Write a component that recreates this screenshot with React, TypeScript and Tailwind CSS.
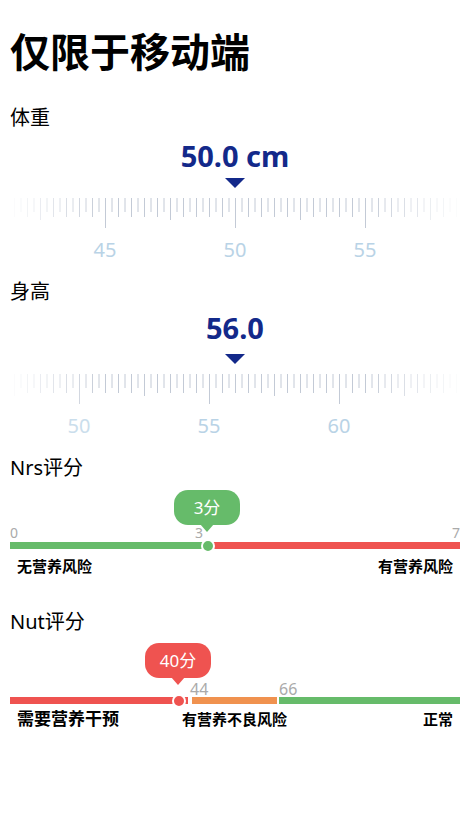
import React from "react";

const F = "font-['Noto_Sans','Noto_Sans_CJK_SC',sans-serif]";

function fade(x: number) {
  const d = Math.min(x - 8, 460 - x);
  return Math.max(0.05, Math.min(1, d / 95));
}

function Ruler({ center }: { center: number }) {
  const ticks: { x: number; len: number; op: number }[] = [];
  for (let k = -40; k <= 40; k++) {
    const x = 235 + k * 6.5;
    if (x < 12 || x > 458) continue;
    const q = Math.round((center + k * 0.25) * 4);
    let len = 14;
    if (q % 20 === 0) len = 30;
    else if (q % 10 === 0) len = 22;
    else if (q % 2 === 0) len = 19;
    ticks.push({ x, len, op: fade(x) });
  }
  const labels: { m: number; x: number }[] = [];
  for (let m = Math.ceil((center - 9) / 5) * 5; m <= center + 9; m += 5) {
    const x = 235 + (m - center) * 26;
    if (x < 20 || x > 446) continue;
    labels.push({ m, x });
  }
  return (
    <div>
      <svg width="466" height="30" className="block">
        {ticks.map((t, i) => (
          <line
            key={i}
            x1={t.x + 0.5}
            x2={t.x + 0.5}
            y1={0}
            y2={t.len}
            stroke="#c3cad6"
            strokeWidth={1}
            opacity={t.op}
          />
        ))}
      </svg>
      <div className="relative mt-[10px] h-[24px]">
        {labels.map((l) => (
          <span
            key={l.m}
            className="absolute top-0 -translate-x-1/2 text-[20px] leading-[24px] text-[#b9d3e6]"
            style={{ left: l.x, opacity: fade(l.x) }}
          >
            {l.m}
          </span>
        ))}
      </div>
    </div>
  );
}

function Pointer() {
  return (
    <svg width="20" height="10" className="mx-auto block">
      <polygon points="0,0 20,0 10,10" fill="#13298a" />
    </svg>
  );
}

function Bubble({ cx, text, color }: { cx: number; text: string; color: string }) {
  return (
    <div className="absolute top-0" style={{ left: cx - 33 }}>
      <div
        className="flex h-[35px] w-[66px] items-center justify-center rounded-[14px] text-[17px] text-white"
        style={{ background: color }}
      >
        {text}
      </div>
      <svg width="14" height="8" className="absolute left-[26px] top-[34px] block">
        <polygon points="0,0 14,0 7,8" fill={color} />
      </svg>
    </div>
  );
}

function Dot({ cx, color }: { cx: number; color: string }) {
  return (
    <div
      className="absolute top-1/2 h-[14px] w-[14px] -translate-y-1/2 rounded-full border-2 border-white"
      style={{ left: cx - 7, background: color }}
    />
  );
}

const GREEN = "#66bb6a";
const RED = "#ef5350";
const ORANGE = "#f0924f";

export default function App() {
  return (
    <div className={`min-h-[832px] w-full bg-white pt-[32px] text-black ${F}`}>
      <h1 className="pl-[10px] text-[40px] font-bold leading-[40px]">仅限于移动端</h1>

      <div className="mt-[36px] pl-[10px] text-[20px] leading-[20px]">体重</div>
      <div className="mt-[10px] pl-[10px] pr-[6px] text-center text-[29px] font-bold leading-[36px] text-[#13298a]">
        50.0 cm
      </div>
      <div className="mt-[4px] pl-[10px] pr-[6px]">
        <Pointer />
      </div>
      <div className="mt-[10px]">
        <Ruler center={50} />
      </div>

      <div className="mt-[20px] pl-[10px] text-[20px] leading-[20px]">身高</div>
      <div className="mt-[8px] pl-[10px] pr-[6px] text-center text-[29px] font-bold leading-[36px] text-[#13298a]">
        56.0
      </div>
      <div className="mt-[8px] pl-[10px] pr-[6px]">
        <Pointer />
      </div>
      <div className="mt-[10px]">
        <Ruler center={56} />
      </div>

      <div className="pl-[10px] pr-[6px]">
        <div className="mt-[20px] text-[20px] leading-[20px]">Nrs评分</div>
        <div className="relative mt-[12px]">
          <div className="h-[36px]" />
          <div className="relative flex h-[14px] justify-between text-[14px] leading-[14px] text-[#aaaaaa]">
            <span>0</span>
            <span className="absolute left-[185px] top-0">3</span>
            <span>7</span>
          </div>
          <div className="relative mt-[2px] flex h-[7px]">
            <div className="h-full w-[198px]" style={{ background: GREEN }} />
            <div className="h-full flex-1" style={{ background: RED }} />
            <Dot cx={198} color={GREEN} />
          </div>
          <Bubble cx={197} text="3分" color={GREEN} />
        </div>
        <div className="mt-[7px] flex justify-between px-[7px] text-[15px] font-bold leading-[20px]">
          <span>无营养风险</span>
          <span>有营养风险</span>
        </div>

        <div className="mt-[36px] text-[20px] leading-[20px]">Nut评分</div>
        <div className="relative mt-[11px]">
          <div className="h-[38px]" />
          <div className="relative h-[16px] text-[16px] leading-[16px] text-[#aaaaaa]">
            <span className="absolute left-[180px] top-0">44</span>
            <span className="absolute left-[269px] top-0">66</span>
          </div>
          <div className="relative flex h-[7px]">
            <div className="h-full w-[178px]" style={{ background: RED }} />
            <div className="ml-[4px] h-full w-[85px]" style={{ background: ORANGE }} />
            <div className="ml-[2px] h-full flex-1" style={{ background: GREEN }} />
            <Dot cx={169} color={RED} />
          </div>
          <Bubble cx={168} text="40分" color={RED} />
        </div>
        <div className="mt-[5px] flex items-baseline px-[7px] font-bold leading-[20px]">
          <span className="w-[165px] text-[17px]">需要营养干预</span>
          <span className="text-[15px]">有营养不良风险</span>
          <span className="ml-auto text-[15px]">正常</span>
        </div>
      </div>
    </div>
  );
}
